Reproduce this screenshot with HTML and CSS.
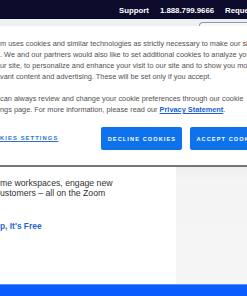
FILE: index.html
```html
<!DOCTYPE html>
<html lang="en">
<head>
    <meta charset="UTF-8">
    <meta name="viewport" content="width=device-width, initial-scale=1.0">
    <title>Zoom</title>
    <link rel="stylesheet" href="styles.css">
</head>
<body>
    <header class="topbar">
        <a class="topbar-link">Support</a>
        <a class="topbar-link">1.888.799.9666</a>
        <a class="topbar-link">Request a Demo</a>
    </header>
    <div class="behind">
        <div class="behind-tab"></div>
    </div>
    <section class="cookie-banner">
        <p class="cookie-text">m uses cookies and similar technologies as strictly necessary to make our site work.<br>. We and our partners would also like to set additional cookies to analyze your use of<br>ur site, to personalize and enhance your visit to our site and to show you more<br>vant content and advertising. These will be set only if you accept.</p>
        <p class="cookie-text">can always review and change your cookie preferences through our cookie<br>ngs page. For more information, please read our <a class="privacy-link">Privacy Statement</a>.</p>
        <div class="cookie-actions">
            <a class="settings-link">KIES SETTINGS</a>
            <button class="cookie-btn decline">DECLINE COOKIES</button>
            <button class="cookie-btn accept">ACCEPT COOKIES</button>
        </div>
    </section>
    <main class="page">
        <div class="page-main">
            <p class="page-copy">me workspaces, engage new<br>ustomers – all on the Zoom</p>
            <a class="signup-link">p, It's Free</a>
        </div>
        <div class="page-side"></div>
    </main>
    <footer class="blue-bar"></footer>
</body>
</html>
```
FILE: styles.css
```css
body, html {
    margin: 0;
    padding: 0;
    width: 247px;
    height: 296px;
    overflow: hidden;
    background-color: #fff;
    font-family: 'Liberation Sans', Arial, sans-serif;
}
.topbar {
    height: 19px;
    background-color: #0c0b2b;
    display: flex;
    align-items: center;
    gap: 11px;
    padding-left: 119px;
    white-space: nowrap;
    overflow: hidden;
}
.topbar-link {
    color: #fff;
    font-size: 7.8px;
    font-weight: 600;
    padding-top: 1px;
}
.behind {
    height: 7px;
    background-color: #eef0f3;
    display: flex;
    justify-content: flex-end;
    align-items: flex-end;
}
.behind-tab {
    width: 47px;
    height: 3px;
    border-top: 1px solid #8e9aa8;
    border-left: 1px solid #8e9aa8;
    border-top-left-radius: 8px;
    background-color: #f7f8fa;
}
.cookie-banner {
    background-color: #fff;
    padding-top: 12px;
    height: 127px;
    border-bottom: 2px solid #767676;
    white-space: nowrap;
    overflow: hidden;
}
.cookie-text {
    margin: 0 0 11px 0;
    font-size: 7.35px;
    line-height: 11px;
    color: #525252;
}
.privacy-link {
    color: #1561d6;
    font-weight: bold;
    text-decoration: underline;
}
.cookie-actions {
    display: flex;
    align-items: center;
    margin-top: 12px;
}
.settings-link {
    color: #2a72d4;
    font-size: 5.8px;
    font-weight: bold;
    letter-spacing: 1.1px;
    text-decoration: underline;
    margin-right: 43px;
    margin-top: -2px;
}
.cookie-btn {
    flex: none;
    height: 23px;
    padding: 0 6px;
    border: none;
    border-radius: 2px;
    background-color: #0e72ed;
    color: #fff;
    font-family: 'Liberation Sans', Arial, sans-serif;
    font-size: 5.6px;
    font-weight: bold;
    letter-spacing: 1.1px;
    margin-right: 8px;
}
.decline {
    width: 81px;
}
.page {
    display: grid;
    grid-template-columns: 176px 1fr;
    height: 117px;
}
.page-main {
    background-color: #fff;
    padding-top: 11px;
    white-space: nowrap;
    overflow: hidden;
}
.page-side {
    background: linear-gradient(#eeeeee, #f4f4f4 12px, #f5f5f5);
}
.page-copy {
    margin: 0;
    font-size: 8.7px;
    line-height: 10px;
    color: #333;
}
.signup-link {
    display: block;
    margin-top: 23px;
    font-size: 8.4px;
    font-weight: 600;
    color: #1f66d8;
}
.blue-bar {
    height: 12px;
    background-color: #0b5cff;
    border-top: 1px solid #5d93f7;
}
```
